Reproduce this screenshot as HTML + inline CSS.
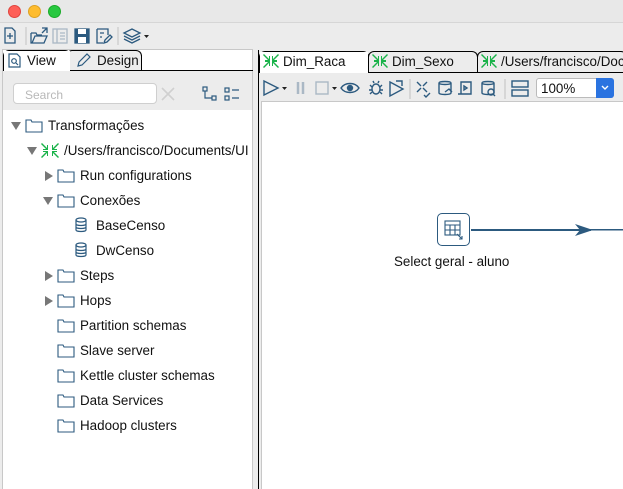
<!DOCTYPE html><html><head><style>
*{margin:0;padding:0;box-sizing:border-box}
body{width:623px;height:489px;overflow:hidden;background:#ececec;font-family:"Liberation Sans",sans-serif;font-size:13.4px;color:#111;position:relative}
.a{position:absolute}
.t{position:absolute;white-space:nowrap;line-height:16px}
.tri{position:absolute;width:0;height:0}
.down{border-left:5px solid transparent;border-right:5px solid transparent;border-top:8px solid #777}
.right{border-top:5px solid transparent;border-bottom:5px solid transparent;border-left:8px solid #777}
</style></head><body>
<div class="a" style="left:0;top:0;width:623px;height:23px;background:#e8e8e8;border-bottom:1px solid #d6d6d6"></div>
<div class="a" style="left:8px;top:5px;width:13px;height:13px;border-radius:50%;background:#fe5f57;border:1px solid #e0443e"></div>
<div class="a" style="left:28px;top:5px;width:13px;height:13px;border-radius:50%;background:#febc2e;border:1px solid #dea123"></div>
<div class="a" style="left:48px;top:5px;width:13px;height:13px;border-radius:50%;background:#28c840;border:1px solid #1aab29"></div>
<svg class="a" style="left:0;top:24px" width="160" height="24" fill="none" stroke="#2c5a7f" stroke-width="1.3">
<path d="M5 4h7l3 3v12H5z"/><path d="M10 9v6M7 12h6"/>
<line x1="26" y1="3" x2="26" y2="21" stroke="#ccc"/>
<path d="M31 9v10h13l3-7H35l-3 7"/><path d="M31 9h5l1 2h5"/><path d="M42 4h5v5M47 4l-5 5"/>
<rect x="53" y="5" width="14" height="14" stroke="#aab8c5"/><path d="M57 5v14M60 9h5M60 12h5M60 15h5" stroke="#aab8c5"/>
<rect x="75" y="5" width="14" height="14" fill="#2c5a7f"/><rect x="78" y="5" width="8" height="5" fill="#fff" stroke="none"/><rect x="78" y="13" width="8" height="6" fill="#fff" stroke="none"/>
<path d="M97 5h11v6M97 5v14h6"/><path d="M100 9h4M100 13h2"/><path d="M104 19l1-3 5-5 2 2-5 5z"/>
<line x1="118" y1="3" x2="118" y2="21" stroke="#ccc"/>
<path d="M124 9l8-4 8 4-8 4z"/><path d="M124 12l8 4 8-4M124 15l8 4 8-4"/>
<path d="M144 11h5l-2.5 3z" fill="#222" stroke="none"/>
</svg>
<div class="a" style="left:2px;top:49px;width:251px;height:440px;background:#fff;border:1px solid #c8c8c8;border-bottom:none"></div>
<div class="a" style="left:3px;top:70px;width:249px;height:40px;background:#ececec"></div>
<div class="a" style="left:3px;top:70px;width:250px;height:1px;background:#000"></div>
<div class="a" style="left:3px;top:50px;width:68px;height:21px;background:#fff;border:1px solid #000;border-bottom:none;border-radius:6px 6px 0 0"></div>
<div class="a" style="left:66px;top:50px;width:76px;height:20px;background:#ececec;border:1px solid #000;border-bottom:none;border-radius:6px 6px 0 0"></div>
<div class="a" style="left:4px;top:51px;width:66px;height:20px;background:#fff"></div>
<svg class="a" style="left:8px;top:53px" width="14" height="15" fill="none" stroke="#2c5a7f" stroke-width="1.2"><path d="M1 1h8l3 3v10H1z"/><circle cx="6" cy="8" r="2.3"/><path d="M8 10l2 2"/></svg>
<div class="t" style="left:27px;top:53px">View</div>
<svg class="a" style="left:76px;top:53px" width="16" height="15" fill="none" stroke="#2c5a7f" stroke-width="1.2"><path d="M2 13l1-4 8-8 3 3-8 8z"/></svg>
<div class="t" style="left:97px;top:53px">Design</div>
<div class="a" style="left:13px;top:83px;width:144px;height:21px;background:#fff;border:1px solid #cfcfcf;border-radius:4px"></div>
<div class="t" style="left:25px;top:87px;color:#b8b8b8;font-size:12px">Search</div>
<svg class="a" style="left:160px;top:86px" width="16" height="16" stroke="#d0d0d0" stroke-width="1.6"><path d="M2 2l12 12M14 2L2 14"/></svg>
<svg class="a" style="left:202px;top:86px" width="44" height="16" fill="none" stroke="#2c5a7f" stroke-width="1.2"><rect x="1" y="1" width="4" height="4"/><rect x="10" y="10" width="4" height="4"/><path d="M3 5v7h7"/><rect x="23" y="2" width="4" height="4"/><rect x="23" y="10" width="4" height="4"/><path d="M30 4h7M30 12h7"/></svg>
<div class="tri down" style="left:11px;top:122px"></div>
<svg class="a" style="left:25px;top:118px" width="18" height="15" fill="none" stroke="#2c5a7f" stroke-width="1.1"><path d="M1 2h5l1 2h10v10H1z"/></svg>
<div class="t" style="left:48px;top:118px">Transformações</div>
<div class="tri down" style="left:27px;top:147px"></div>
<svg class="a" style="left:41px;top:142px" width="18" height="17" fill="#1ab34a"><path d="M1 1l5 5V3h1v5H2V7h3L0 2zM17 1l-5 5V3h-1v5h5V7h-3l5-5zM1 16l5-5v3h1V9H2v1h3l-5 5zM17 16l-5-5v3h-1V9h5v1h-3l5 5z"/></svg>
<div class="t" style="left:64px;top:143px">/Users/francisco/Documents/UI</div>
<div class="tri right" style="left:45px;top:171px"></div>
<svg class="a" style="left:57px;top:168px" width="18" height="15" fill="none" stroke="#2c5a7f" stroke-width="1.1"><path d="M1 2h5l1 2h10v10H1z"/></svg>
<div class="t" style="left:80px;top:168px">Run configurations</div>
<div class="tri down" style="left:43px;top:197px"></div>
<svg class="a" style="left:57px;top:193px" width="18" height="15" fill="none" stroke="#2c5a7f" stroke-width="1.1"><path d="M1 2h5l1 2h10v10H1z"/></svg>
<div class="t" style="left:80px;top:193px">Conexões</div>
<svg class="a" style="left:75px;top:217px" width="12" height="16" fill="none" stroke="#2c5a7f" stroke-width="1.2"><ellipse cx="6" cy="3" rx="5" ry="2"/><path d="M1 3v10c0 2 10 2 10 0V3M1 7c0 2 10 2 10 0M1 10c0 2 10 2 10 0"/></svg>
<div class="t" style="left:96px;top:218px">BaseCenso</div>
<svg class="a" style="left:75px;top:242px" width="12" height="16" fill="none" stroke="#2c5a7f" stroke-width="1.2"><ellipse cx="6" cy="3" rx="5" ry="2"/><path d="M1 3v10c0 2 10 2 10 0V3M1 7c0 2 10 2 10 0M1 10c0 2 10 2 10 0"/></svg>
<div class="t" style="left:96px;top:243px">DwCenso</div>
<div class="tri right" style="left:45px;top:271px"></div>
<svg class="a" style="left:57px;top:268px" width="18" height="15" fill="none" stroke="#2c5a7f" stroke-width="1.1"><path d="M1 2h5l1 2h10v10H1z"/></svg>
<div class="t" style="left:80px;top:268px">Steps</div>
<div class="tri right" style="left:45px;top:296px"></div>
<svg class="a" style="left:57px;top:293px" width="18" height="15" fill="none" stroke="#2c5a7f" stroke-width="1.1"><path d="M1 2h5l1 2h10v10H1z"/></svg>
<div class="t" style="left:80px;top:293px">Hops</div>
<svg class="a" style="left:57px;top:318px" width="18" height="15" fill="none" stroke="#2c5a7f" stroke-width="1.1"><path d="M1 2h5l1 2h10v10H1z"/></svg>
<div class="t" style="left:80px;top:318px">Partition schemas</div>
<svg class="a" style="left:57px;top:343px" width="18" height="15" fill="none" stroke="#2c5a7f" stroke-width="1.1"><path d="M1 2h5l1 2h10v10H1z"/></svg>
<div class="t" style="left:80px;top:343px">Slave server</div>
<svg class="a" style="left:57px;top:368px" width="18" height="15" fill="none" stroke="#2c5a7f" stroke-width="1.1"><path d="M1 2h5l1 2h10v10H1z"/></svg>
<div class="t" style="left:80px;top:368px">Kettle cluster schemas</div>
<svg class="a" style="left:57px;top:393px" width="18" height="15" fill="none" stroke="#2c5a7f" stroke-width="1.1"><path d="M1 2h5l1 2h10v10H1z"/></svg>
<div class="t" style="left:80px;top:393px">Data Services</div>
<svg class="a" style="left:57px;top:418px" width="18" height="15" fill="none" stroke="#2c5a7f" stroke-width="1.1"><path d="M1 2h5l1 2h10v10H1z"/></svg>
<div class="t" style="left:80px;top:418px">Hadoop clusters</div>
<div class="a" style="left:258px;top:50px;width:365px;height:439px;background:#ececec;border-left:1px solid #000"></div>
<div class="a" style="left:258px;top:72px;width:365px;height:1px;background:#000"></div>
<div class="a" style="left:259px;top:51px;width:110px;height:22px;background:#fff;border:1px solid #000;border-bottom:none;border-radius:6px 6px 0 0"></div>
<div class="a" style="left:368px;top:51px;width:110px;height:22px;border:1px solid #000;border-bottom:none;border-radius:6px 6px 0 0"></div>
<div class="a" style="left:477px;top:51px;width:150px;height:22px;border:1px solid #000;border-bottom:none;border-radius:6px 6px 0 0"></div>
<div class="a" style="left:260px;top:52px;width:108px;height:21px;background:#fff"></div>
<svg class="a" style="left:263px;top:53px" width="16" height="16" fill="#1ab34a"><path d="M1 1l5 5V3h1v5H2V7h3L0 2zM15 1l-5 5V3H9v5h5V7h-3l5-5zM1 15l5-5v3h1V8H2v1h3l-5 5zM15 15l-5-5v3H9V8h5v1h-3l5 5z"/></svg>
<div class="t" style="left:283px;top:54px">Dim_Raca</div>
<svg class="a" style="left:372px;top:53px" width="16" height="16" fill="#1ab34a"><path d="M1 1l5 5V3h1v5H2V7h3L0 2zM15 1l-5 5V3H9v5h5V7h-3l5-5zM1 15l5-5v3h1V8H2v1h3l-5 5zM15 15l-5-5v3H9V8h5v1h-3l5 5z"/></svg>
<div class="t" style="left:392px;top:54px">Dim_Sexo</div>
<svg class="a" style="left:481px;top:53px" width="16" height="16" fill="#1ab34a"><path d="M1 1l5 5V3h1v5H2V7h3L0 2zM15 1l-5 5V3H9v5h5V7h-3l5-5zM1 15l5-5v3h1V8H2v1h3l-5 5zM15 15l-5-5v3H9V8h5v1h-3l5 5z"/></svg>
<div class="t" style="left:501px;top:54px">/Users/francisco/Doc</div>
<svg class="a" style="left:262px;top:78px" width="270" height="22" fill="none" stroke="#2c5a7f" stroke-width="1.4">
<path d="M2 3l14 7-14 7z"/><path d="M20 9h5l-2.5 3z" fill="#222" stroke="none"/>
<path d="M36 4v12M41 4v12" stroke="#aab8c5" stroke-width="2.5"/>
<rect x="54" y="4" width="12" height="12" stroke="#aab8c5"/><path d="M70 9h5l-2.5 3z" fill="#222" stroke="none"/>
<path d="M79 10c4-6 14-6 18 0-4 6-14 6-18 0z"/><circle cx="88" cy="10" r="2.5" fill="#2c5a7f"/>
<ellipse cx="114" cy="11" rx="4" ry="5"/><path d="M108 7l2 2M120 7l-2 2M107 12h3M118 12h3M108 16l2-2M120 16l-2-2M112 5l-1-2M116 5l1-2"/>
<path d="M128 4l13 7-13 7z"/><path d="M134 3h6v5"/>
<line x1="148" y1="1" x2="148" y2="21" stroke="#ccc"/>
<path d="M155 4l4 4M165 4l-4 4M155 14l4-4M165 14l-4-4M162 17l2 2 4-4"/>
<path d="M177 5c0-2 12-2 12 0v10c0 2-12 2-12 0z M177 5c0 2 12 2 12 0M183 14l4-3 3 3"/>
<path d="M199 4h10v12h-10z M196 16h10M202 8l3 2-3 2z"/>
<path d="M220 5c0-2 12-2 12 0v10c0 2-12 2-12 0z M220 5c0 2 12 2 12 0"/><circle cx="229" cy="14" r="3"/><path d="M231 16l2 2"/>
<line x1="243" y1="1" x2="243" y2="21" stroke="#ccc"/>
<rect x="250" y="3" width="16" height="6"/><rect x="250" y="12" width="16" height="6"/>
</svg>
<div class="a" style="left:536px;top:78px;width:78px;height:20px;background:#fff;border:1px solid #bbb;border-radius:3px"></div>
<div class="t" style="left:541px;top:81px">100%</div>
<div class="a" style="left:596px;top:78px;width:18px;height:20px;background:#2a73e0;border-radius:0 3px 3px 0"></div>
<svg class="a" style="left:600px;top:84px" width="10" height="8" stroke="#fff" stroke-width="1.4" fill="none"><path d="M2 2l3 3 3-3"/></svg>
<div class="a" style="left:261px;top:101px;width:362px;height:388px;background:#fff;border-left:1px solid #c8c8c8;border-top:1px solid #c8c8c8"></div>
<div class="a" style="left:437px;top:213px;width:33px;height:33px;border:1.5px solid #2c5a7f;border-radius:5px;background:#fff"></div>
<svg class="a" style="left:443px;top:219px" width="22" height="22" fill="none" stroke="#2c5a7f" stroke-width="1.1"><rect x="2" y="2" width="15" height="14"/><path d="M2 6h15M7 6v10M12 6v10M2 11h15"/><path d="M14 15l5 5M19 17v3h-3"/></svg>
<div class="a" style="left:471px;top:229px;width:120px;height:1.5px;background:#2c5a7f"></div>
<svg class="a" style="left:575px;top:223px" width="48" height="14"><path d="M0 1l18 6-18 6 5-6z" fill="#2c5a7f"/><rect x="15" y="6" width="33" height="1.5" fill="#2c5a7f"/></svg>
<div class="t" style="left:394px;top:254px">Select geral - aluno</div>
</body></html>
